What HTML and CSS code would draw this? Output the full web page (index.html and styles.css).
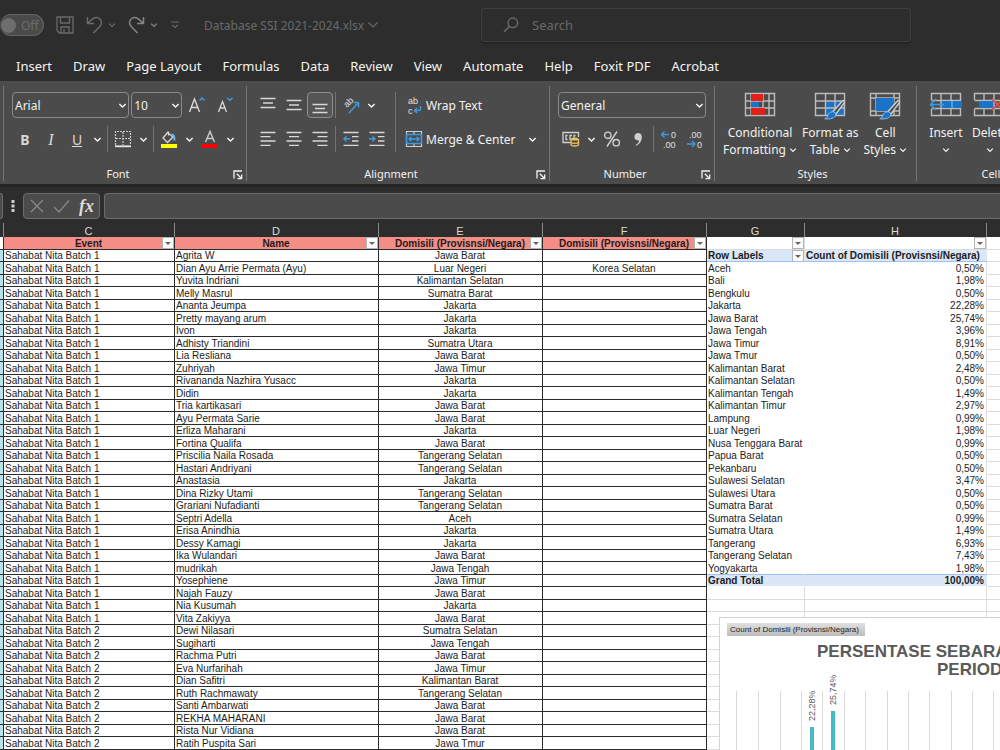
FILE: index.html
```html
<!DOCTYPE html>
<html lang="en">
<head>
<meta charset="utf-8">
<title>Database SSI 2021-2024.xlsx</title>
<link rel="stylesheet" href="styles.css">
</head>
<body>
<svg class="defs" aria-hidden="true">
  <symbol id="chev" viewBox="0 0 8 8"><path d="M1.2 2.6 4 5.4 6.8 2.6" fill="none" stroke="currentColor" stroke-width="1.300"/></symbol>
  <symbol id="launch" viewBox="0 0 10 10"><path d="M1 8.500V1h8M3.800 3.800 8 8M8.700 4.500v4.200H4.500" fill="none" stroke="currentColor" stroke-width="1.300"/></symbol>
  <symbol id="brush" viewBox="0 0 22 20"><path d="M20.500 .8c.8.6.5 1.600 0 2.300L12.500 14l-3-2.500L18.500 1.500c.6-.7 1.300-1.100 2-.7z" fill="#4b4b4b" stroke="#d0d0d0" stroke-width="1.400"/><path d="M8.800 11.800c2-.3 4 1.500 3.500 3.300-.8 3-5.500 4.300-11 3.700 2.500-.8 2.500-2 3.200-4 .7-1.700 2-2.800 4.300-3z" fill="#1a73c9" stroke="#8dc3f0" stroke-width="1"/></symbol>
</svg>

<header class="titlebar">
  <button class="autosave" type="button"><span class="knob"></span>Off</button>
  <div class="quick">
    <button type="button" aria-label="Save"><svg width="18" height="18" viewBox="0 0 18 18"><path d="M1 1h16v16H3.500L1 14.500zM4.500 1v6h9V1M5 17v-6h8v6M8 13v4" fill="none" stroke="currentColor" stroke-width="1.300"/></svg></button>
    <button type="button" aria-label="Undo"><svg width="17" height="18" viewBox="0 0 17 18"><path d="M1.500 1v6.500H8M1.800 7.200 6 3.400c3-2.700 6.700-2.200 8.400.2 1.700 2.500 1.200 5-.7 7L7.500 17" fill="none" stroke="currentColor" stroke-width="1.500"/></svg></button>
    <button type="button" aria-label="Undo list"><svg width="8" height="8"><use href="#chev"/></svg></button>
    <button type="button" class="lit" aria-label="Redo"><svg width="17" height="18" viewBox="0 0 17 18"><path d="M15.500 1v6.500H9M15.200 7.200 11 3.400c-3-2.700-6.700-2.200-8.400.2-1.700 2.500-1.200 5 .7 7L9.500 17" fill="none" stroke="currentColor" stroke-width="1.500"/></svg></button>
    <button type="button" class="lit" aria-label="Redo list"><svg width="8" height="8"><use href="#chev"/></svg></button>
    <button type="button" aria-label="Customize toolbar"><svg width="10" height="8" viewBox="0 0 10 8"><path d="M1 1h8M2.300 4 5 6.500 7.700 4" fill="none" stroke="currentColor" stroke-width="1.200"/></svg></button>
  </div>
  <button class="docname" type="button">Database SSI 2021-2024.xlsx <svg width="12" height="8" viewBox="0 0 12 8"><path d="m1.500 1.500 4.500 4.500 4.500-4.500" fill="none" stroke="currentColor" stroke-width="1.200"/></svg></button>
  <label class="search"><svg width="16" height="16" viewBox="0 0 16 16"><circle cx="9.800" cy="5.800" r="4.800" fill="none" stroke="currentColor" stroke-width="1.400"/><path d="M6.200 9.400 1 15" stroke="currentColor" stroke-width="1.500"/></svg><input type="search" placeholder="Search" aria-label="Search"></label>
</header>

<nav class="tabs">
  <a href="#insert">Insert</a><a href="#draw">Draw</a><a href="#layout">Page Layout</a><a href="#formulas">Formulas</a><a href="#data">Data</a><a href="#review">Review</a><a href="#view">View</a><a href="#automate">Automate</a><a href="#help">Help</a><a href="#foxit">Foxit PDF</a><a href="#acrobat">Acrobat</a>
</nav>

<section class="ribbon">
  <div class="group g-font">
    <div class="row combos">
      <label class="combo face"><select aria-label="Font"><option>Arial</option></select><svg width="9" height="9"><use href="#chev"/></svg></label>
      <label class="combo size"><select aria-label="Font size"><option>10</option></select><svg width="9" height="9"><use href="#chev"/></svg></label>
      <button class="tool" type="button" aria-label="Increase font size"><svg width="18" height="18" viewBox="0 0 18 18"><path d="M1.500 16 6.500 3l5 13M3.300 11.500h6.500" fill="none" stroke="#d8d8d8" stroke-width="1.400"/><path d="M11.500 4.500 14 2l2.500 2.500" fill="none" stroke="#3d9ae0" stroke-width="1.500"/></svg></button>
      <button class="tool" type="button" aria-label="Decrease font size"><svg width="18" height="18" viewBox="0 0 18 18"><path d="M2.500 16 6.500 5.500l4 10.500M4 12h5" fill="none" stroke="#d8d8d8" stroke-width="1.300"/><path d="m11.500 2 2.500 2.500L16.500 2" fill="none" stroke="#3d9ae0" stroke-width="1.500"/></svg></button>
    </div>
    <div class="row">
      <button class="tool" type="button"><b>B</b></button>
      <button class="tool" type="button"><i>I</i></button>
      <button class="tool" type="button"><u>U</u></button>
      <button class="drop" type="button" aria-label="Underline options"><svg width="9" height="9"><use href="#chev"/></svg></button>
      <span class="sep"></span>
      <button class="tool" type="button" aria-label="Borders"><svg width="18" height="18" viewBox="0 0 18 18"><path d="M1.500 15V1.500h15V15M9 2v13M2 8.500h14" fill="none" stroke="#c8c8c8" stroke-width="1.200" stroke-dasharray="2 1"/><path d="M1 16.300h16" stroke="#e8e8e8" stroke-width="1.800"/></svg></button>
      <button class="drop" type="button" aria-label="Border options"><svg width="9" height="9"><use href="#chev"/></svg></button>
      <span class="sep"></span>
      <button class="tool" type="button" aria-label="Fill color"><svg width="18" height="18" viewBox="0 0 18 18"><path d="M8.500 1.500v4M7.500 2.500 3 8l4.500 4.500L13 7z" fill="none" stroke="#d8d8d8" stroke-width="1.300"/><path d="M11.500 4.500c2 0 3.200 1.500 3 6" fill="none" stroke="#6db4ee" stroke-width="2"/><path d="M1 14h16v4H1z" fill="#ff0"/></svg></button>
      <button class="drop" type="button" aria-label="Fill options"><svg width="9" height="9"><use href="#chev"/></svg></button>
      <button class="tool" type="button" aria-label="Font color"><svg width="18" height="18" viewBox="0 0 18 18"><path d="M4.500 12 9 1.500 13.500 12M6 8.500h6" fill="none" stroke="#c8c8c8" stroke-width="1.500"/><path d="M1 14h16v4H1z" fill="#f00"/></svg></button>
      <button class="drop" type="button" aria-label="Font color options"><svg width="9" height="9"><use href="#chev"/></svg></button>
    </div>
    <div class="caption">Font<button type="button" aria-label="Font settings"><svg width="10" height="10"><use href="#launch"/></svg></button></div>
  </div>

  <div class="group g-align">
    <div class="split">
      <div class="rows">
        <div class="row">
          <button class="tool" type="button" aria-label="Top align"><svg width="16" height="18" viewBox="0 0 16 18"><path d="M.5 2.500h15M3 7h10M.5 11.500h15" stroke="#d8d8d8" stroke-width="1.300"/></svg></button>
          <button class="tool" type="button" aria-label="Middle align"><svg width="16" height="18" viewBox="0 0 16 18"><path d="M.5 4.500h15M3 9h10M.5 13.500h15" stroke="#d8d8d8" stroke-width="1.300"/></svg></button>
          <button class="tool on" type="button" aria-label="Bottom align"><svg width="16" height="18" viewBox="0 0 16 18"><path d="M.5 8.500h15M3 12.500h10M.5 16.500h15" stroke="#d8d8d8" stroke-width="1.300"/></svg></button>
          <span class="sep"></span>
          <button class="tool" type="button" aria-label="Orientation"><svg class="glyphs" width="18" height="18" viewBox="0 0 18 18"><text transform="translate(5 12) rotate(-45)">ab</text><path d="M7 17 16 7M11.500 6.500H16.500V11.500" fill="none" stroke="#3d9ae0" stroke-width="1.500"/></svg></button>
          <button class="drop" type="button" aria-label="Orientation options"><svg width="9" height="9"><use href="#chev"/></svg></button>
        </div>
        <div class="row">
          <button class="tool" type="button" aria-label="Align left"><svg width="16" height="16" viewBox="0 0 16 16"><path d="M.5 1.500h15M.5 5.700h10M.5 10h15M.5 14.300h10" stroke="#d8d8d8" stroke-width="1.300"/></svg></button>
          <button class="tool" type="button" aria-label="Center"><svg width="16" height="16" viewBox="0 0 16 16"><path d="M.5 1.500h15M3 5.700h10M.5 10h15M3 14.300h10" stroke="#d8d8d8" stroke-width="1.300"/></svg></button>
          <button class="tool" type="button" aria-label="Align right"><svg width="16" height="16" viewBox="0 0 16 16"><path d="M.5 1.500h15M5.500 5.700h10M.5 10h15M5.500 14.300h10" stroke="#d8d8d8" stroke-width="1.300"/></svg></button>
          <span class="sep"></span>
          <button class="tool" type="button" aria-label="Decrease indent"><svg width="16" height="16" viewBox="0 0 16 16"><path d="M.5 1.500h15M9 5.700h6.500M9 10h6.500M.5 14.300h15" stroke="#d8d8d8" stroke-width="1.300"/><path d="M7 7.800H1M3.500 5.300 1 7.800l2.500 2.500" fill="none" stroke="#3d9ae0" stroke-width="1.400"/></svg></button>
          <button class="tool" type="button" aria-label="Increase indent"><svg width="16" height="16" viewBox="0 0 16 16"><path d="M.5 1.500h15M9 5.700h6.500M9 10h6.500M.5 14.300h15" stroke="#d8d8d8" stroke-width="1.300"/><path d="M0 7.800h6M3.500 5.300 6 7.800l-2.500 2.500" fill="none" stroke="#3d9ae0" stroke-width="1.400"/></svg></button>
        </div>
      </div>
      <div class="rows wide">
        <div class="row"><button class="textual" type="button"><svg class="glyphs" width="18" height="22" viewBox="0 0 18 22"><text x="3" y="10">ab</text><text x="3" y="20">c</text><path d="M15.500 12v2.500q0 2-2 2H9.500M12 14l-2.500 2.500L12 19" fill="none" stroke="#3d9ae0" stroke-width="1.500"/></svg>Wrap Text</button></div>
        <div class="row"><button class="textual" type="button"><svg width="18" height="18" viewBox="0 0 18 18"><path d="M1.500 1.500h15v15h-15zM9 1.500V5M9 13v3.500" fill="none" stroke="#d0d0d0" stroke-width="1.200"/><path d="M1.500 4.500h15v9h-15zM4 9h10M6.300 6.700 4 9l2.300 2.300M11.700 6.700 14 9l-2.300 2.300" fill="none" stroke="#3d9ae0" stroke-width="1.400"/></svg>Merge &amp; Center</button><button class="drop" type="button" aria-label="Merge options"><svg width="9" height="9"><use href="#chev"/></svg></button></div>
      </div>
    </div>
    <div class="caption">Alignment<button type="button" aria-label="Alignment settings"><svg width="10" height="10"><use href="#launch"/></svg></button></div>
  </div>

  <div class="group g-number">
    <div class="row">
      <label class="combo format"><select aria-label="Number format"><option>General</option></select><svg width="9" height="9"><use href="#chev"/></svg></label>
    </div>
    <div class="row">
      <button class="tool" type="button" aria-label="Accounting format"><svg width="18" height="16" viewBox="0 0 18 16"><path d="M8 11.500H1v-10h15.500V6M5.500 4.500H4v4h1.500M10 4.500H8v4h1.500M13.500 4.500H12V7" fill="none" stroke="#d0d0d0" stroke-width="1.300"/><path d="M9 8v5.500c0 2 7.500 2 7.500 0V8" fill="#4b4b4b" stroke="#eec45f" stroke-width="1.300"/><ellipse cx="12.750" cy="8" rx="3.750" ry="1.500" fill="#eec45f"/><path d="M9 11c0 1.700 7.500 1.700 7.500 0" fill="none" stroke="#eec45f" stroke-width="1.300"/></svg></button>
      <button class="drop" type="button" aria-label="Accounting options"><svg width="9" height="9"><use href="#chev"/></svg></button>
      <button class="tool" type="button" aria-label="Percent style"><svg width="18" height="18" viewBox="0 0 18 18"><circle cx="4.800" cy="5.300" r="3.200" fill="none" stroke="#d0d0d0" stroke-width="1.400"/><circle cx="13.200" cy="12.700" r="3.200" fill="none" stroke="#d0d0d0" stroke-width="1.400"/><path d="M14 1.500 4 16.500" stroke="#d0d0d0" stroke-width="1.400"/></svg></button>
      <button class="tool" type="button" aria-label="Comma style"><svg width="10" height="14" viewBox="0 0 10 14"><path d="M2.500 13C5 12 6 10.500 6 8.300A3.700 3.700 0 1 1 8.800 4.500c.2 4.300-2 7.500-5.600 9.300z" fill="#d0d0d0"/></svg></button>
      <span class="sep"></span>
      <button class="tool" type="button" aria-label="Increase decimal"><svg class="glyphs" width="18" height="22" viewBox="0 0 18 22"><text x="11" y="10">0</text><text x="3" y="20">.00</text><path d="M9 6.500H1.500M4.500 3.500l-3 3 3 3" fill="none" stroke="#3d9ae0" stroke-width="1.400"/></svg></button>
      <button class="tool" type="button" aria-label="Decrease decimal"><svg class="glyphs" width="18" height="22" viewBox="0 0 18 22"><text x="3" y="10">.00</text><text x="11" y="20">0</text><path d="M1 16h8M6 13l3 3-3 3" fill="none" stroke="#3d9ae0" stroke-width="1.400"/></svg></button>
    </div>
    <div class="caption">Number<button type="button" aria-label="Number settings"><svg width="10" height="10"><use href="#launch"/></svg></button></div>
  </div>

  <div class="group g-styles">
    <div class="bigs">
      <button class="big" type="button"><svg width="32" height="28" viewBox="0 0 32 28"><path d="M1.500 1.500h29v22h-29zM7 1.500v22M13 1.500v22M19 1.500v22M25 1.500v22M1.500 9h29M1.500 16h29" fill="none" stroke="#bcbcbc" stroke-width="1.400"/><path d="M7 2h12v7H7zM7 16h14v7H7z" fill="#e3201b"/><path d="M7 10h8v5H7z" fill="#1a73c9"/></svg><span>Conditional<br>Formatting <svg width="8" height="8"><use href="#chev"/></svg></span></button>
      <button class="big" type="button"><svg width="32" height="28" viewBox="0 0 32 28"><path d="M12 9h19v15H12z" fill="#1a73c9"/><path d="M1.500 1.500h29v22h-29zM11.500 1.500v22M21 1.500v22M1.500 9h29M1.500 16h29" fill="none" stroke="#bcbcbc" stroke-width="1.400"/><use href="#brush" x="9" y="8" width="23" height="20"/></svg><span>Format as<br>Table <svg width="8" height="8"><use href="#chev"/></svg></span></button>
      <button class="big" type="button"><svg width="32" height="28" viewBox="0 0 32 28"><path d="M1.500 1.500h29v22h-29zM7 1.500v22M25 1.500v22M1.500 6h29M1.500 19h29" fill="none" stroke="#bcbcbc" stroke-width="1.400"/><path d="M7 6h18v13H7z" fill="#1a73c9"/><use href="#brush" x="9" y="8" width="23" height="20"/></svg><span>Cell<br>Styles <svg width="8" height="8"><use href="#chev"/></svg></span></button>
    </div>
    <div class="caption">Styles</div>
  </div>

  <div class="group g-cells">
    <div class="bigs">
      <button class="big" type="button"><svg width="34" height="28" viewBox="0 0 34 28"><path d="M2.500 8V1.500h29v22h-29V17M12 1.500v22M22 1.500v22M2.500 8.500h29M2.500 16.500h29" fill="none" stroke="#bcbcbc" stroke-width="1.400"/><path d="M13 9h20v7H13z" fill="#1a73c9"/><path d="M23 9v7" stroke="#8dc3f0"/><path d="M15 12.500H1.500M7 7l-5.500 5.500L7 18" fill="none" stroke="#3d9ae0" stroke-width="1.500"/></svg><span>Insert<br><svg width="8" height="8"><use href="#chev"/></svg></span></button>
      <button class="big" type="button"><svg width="34" height="28" viewBox="0 0 34 28"><path d="M1.500 8V1.500h30v22h-30V17M11 1.500v22M21 1.500v22M1.500 8.500h30M1.500 16.500h30" fill="none" stroke="#bcbcbc" stroke-width="1.400"/><path d="M6 9h14v7H6z" fill="#1a73c9"/><path d="m19 7 11 11M30 7 19 18" stroke="#e05050" stroke-width="1.800"/></svg><span>Delete<br><svg width="8" height="8"><use href="#chev"/></svg></span></button>
    </div>
    <div class="caption">Cells</div>
  </div>
</section>

<section class="formulabar">
  <span class="namebox"></span>
  <svg class="dots" width="4" height="14" viewBox="0 0 4 14"><path d="M.5 1h3v3h-3zM.5 5.500h3v3h-3zM.5 10h3v3h-3z" fill="#d0d0d0"/></svg>
  <div class="actions">
    <button type="button" aria-label="Cancel"><svg width="14" height="14" viewBox="0 0 14 14"><path d="m1 1 12 12M13 1 1 13" stroke="#8a8a8a" stroke-width="1.200"/></svg></button>
    <button type="button" aria-label="Enter"><svg width="17" height="14" viewBox="0 0 17 14"><path d="m1 8 5 5L16 1.500" fill="none" stroke="#8a8a8a" stroke-width="1.200"/></svg></button>
    <button type="button" class="fx">fx</button>
  </div>
  <input type="text" aria-label="Formula">
</section>

<main class="sheet">
<table>
<colgroup><col class="cb"><col class="cc"><col class="cd"><col class="ce"><col class="ce"><col class="cg"><col class="ch"><col></colgroup>
<thead>
<tr class="letters"><th><th>C<th>D<th>E<th>F<th>G<th>H<th></tr>
<tr class="titles"><td><th>Event<button type="button" aria-label="Filter"></button><th>Name<button type="button" aria-label="Filter"></button><th>Domisili (Provisnsi/Negara)<button type="button" aria-label="Filter"></button><th>Domisili (Provisnsi/Negara)<button type="button" aria-label="Filter"></button><td><button type="button" aria-label="Filter"></button><td><button type="button" aria-label="Filter"></button><td></tr>
</thead>
<tbody>
<tr class="pv head"><td><td>Sahabat Nita Batch 1<td>Agrita W<td>Jawa Barat<td><td>Row Labels<button type="button" aria-label="Filter"></button><td>Count of Domisili (Provisnsi/Negara)<td></tr>
<tr class="pv"><td><td>Sahabat Nita Batch 1<td>Dian Ayu Arrie Permata (Ayu)<td>Luar Negeri<td>Korea Selatan<td>Aceh<td>0,50%<td></tr>
<tr class="pv"><td><td>Sahabat Nita Batch 1<td>Yuvita Indriani<td>Kalimantan Selatan<td><td>Bali<td>1,98%<td></tr>
<tr class="pv"><td><td>Sahabat Nita Batch 1<td>Melly Masrul<td>Sumatra Barat<td><td>Bengkulu<td>0,50%<td></tr>
<tr class="pv"><td><td>Sahabat Nita Batch 1<td>Ananta Jeumpa<td>Jakarta<td><td>Jakarta<td>22,28%<td></tr>
<tr class="pv"><td><td>Sahabat Nita Batch 1<td>Pretty mayang arum<td>Jakarta<td><td>Jawa Barat<td>25,74%<td></tr>
<tr class="pv"><td><td>Sahabat Nita Batch 1<td>Ivon<td>Jakarta<td><td>Jawa Tengah<td>3,96%<td></tr>
<tr class="pv"><td><td>Sahabat Nita Batch 1<td>Adhisty Triandini<td>Sumatra Utara<td><td>Jawa Timur<td>8,91%<td></tr>
<tr class="pv"><td><td>Sahabat Nita Batch 1<td>Lia Resliana<td>Jawa Barat<td><td>Jawa Tmur<td>0,50%<td></tr>
<tr class="pv"><td><td>Sahabat Nita Batch 1<td>Zuhriyah<td>Jawa Timur<td><td>Kalimantan Barat<td>2,48%<td></tr>
<tr class="pv"><td><td>Sahabat Nita Batch 1<td>Rivananda Nazhira Yusacc<td>Jakarta<td><td>Kalimantan Selatan<td>0,50%<td></tr>
<tr class="pv"><td><td>Sahabat Nita Batch 1<td>Didin<td>Jakarta<td><td>Kalimantan Tengah<td>1,49%<td></tr>
<tr class="pv"><td><td>Sahabat Nita Batch 1<td>Tria kartikasari<td>Jawa Barat<td><td>Kalimantan Timur<td>2,97%<td></tr>
<tr class="pv"><td><td>Sahabat Nita Batch 1<td>Ayu Permata Sarie<td>Jawa Barat<td><td>Lampung<td>0,99%<td></tr>
<tr class="pv"><td><td>Sahabat Nita Batch 1<td>Erliza Maharani<td>Jakarta<td><td>Luar Negeri<td>1,98%<td></tr>
<tr class="pv"><td><td>Sahabat Nita Batch 1<td>Fortina Qualifa<td>Jawa Barat<td><td>Nusa Tenggara Barat<td>0,99%<td></tr>
<tr class="pv"><td><td>Sahabat Nita Batch 1<td>Priscilia Naila Rosada<td>Tangerang Selatan<td><td>Papua Barat<td>0,50%<td></tr>
<tr class="pv"><td><td>Sahabat Nita Batch 1<td>Hastari Andriyani<td>Tangerang Selatan<td><td>Pekanbaru<td>0,50%<td></tr>
<tr class="pv"><td><td>Sahabat Nita Batch 1<td>Anastasia<td>Jakarta<td><td>Sulawesi Selatan<td>3,47%<td></tr>
<tr class="pv"><td><td>Sahabat Nita Batch 1<td>Dina Rizky Utami<td>Tangerang Selatan<td><td>Sulawesi Utara<td>0,50%<td></tr>
<tr class="pv"><td><td>Sahabat Nita Batch 1<td>Grariani Nufadianti<td>Tangerang Selatan<td><td>Sumatra Barat<td>0,50%<td></tr>
<tr class="pv"><td><td>Sahabat Nita Batch 1<td>Septri Adella<td>Aceh<td><td>Sumatra Selatan<td>0,99%<td></tr>
<tr class="pv"><td><td>Sahabat Nita Batch 1<td>Erisa Anindhia<td>Jakarta<td><td>Sumatra Utara<td>1,49%<td></tr>
<tr class="pv"><td><td>Sahabat Nita Batch 1<td>Dessy Kamagi<td>Jakarta<td><td>Tangerang<td>6,93%<td></tr>
<tr class="pv"><td><td>Sahabat Nita Batch 1<td>Ika Wulandari<td>Jawa Barat<td><td>Tangerang Selatan<td>7,43%<td></tr>
<tr class="pv last"><td><td>Sahabat Nita Batch 1<td>mudrikah<td>Jawa Tengah<td><td>Yogyakarta<td>1,98%<td></tr>
<tr class="pv total"><td><td>Sahabat Nita Batch 1<td>Yosephiene<td>Jawa Timur<td><td>Grand Total<td>100,00%<td></tr>
<tr><td><td>Sahabat Nita Batch 1<td>Najah Fauzy<td>Jawa Barat<td><td><td><td></tr>
<tr><td><td>Sahabat Nita Batch 1<td>Nia Kusumah<td>Jakarta<td><td><td><td></tr>
<tr><td><td>Sahabat Nita Batch 1<td>Vita Zakiyya<td>Jawa Barat<td><td><td><td></tr>
<tr><td><td>Sahabat Nita Batch 2<td>Dewi Nilasari<td>Sumatra Selatan<td><td><td><td></tr>
<tr><td><td>Sahabat Nita Batch 2<td>Sugiharti<td>Jawa Tengah<td><td><td><td></tr>
<tr><td><td>Sahabat Nita Batch 2<td>Rachma Putri<td>Jawa Barat<td><td><td><td></tr>
<tr><td><td>Sahabat Nita Batch 2<td>Eva Nurfarihah<td>Jawa Timur<td><td><td><td></tr>
<tr><td><td>Sahabat Nita Batch 2<td>Dian Safitri<td>Kalimantan Barat<td><td><td><td></tr>
<tr><td><td>Sahabat Nita Batch 2<td>Ruth Rachmawaty<td>Tangerang Selatan<td><td><td><td></tr>
<tr><td><td>Sahabat Nita Batch 2<td>Santi Ambarwati<td>Jawa Barat<td><td><td><td></tr>
<tr><td><td>Sahabat Nita Batch 2<td>REKHA MAHARANI<td>Jawa Barat<td><td><td><td></tr>
<tr><td><td>Sahabat Nita Batch 2<td>Rista Nur Vidiana<td>Jawa Barat<td><td><td><td></tr>
<tr><td><td>Sahabat Nita Batch 2<td>Ratih Puspita Sari<td>Jawa Tmur<td><td><td><td></tr>
</tbody>
</table>
<figure class="chart">
  <button class="field" type="button">Count of Domisili (Provisnsi/Negara)</button>
  <figcaption><span>PERSENTASE SEBARAN</span><span class="second">PERIODE</span></figcaption>
  <svg class="plot" width="290" height="80" viewBox="0 0 290 80">
    <path d="M16.500 20v60M38.500 20v60M60.500 20v60M81.500 20v60M102.500 20v60M124.500 20v60M145.500 20v60M167.500 20v60M188.500 20v60M209.500 20v60M231.500 20v60M252.500 20v60M273.500 20v60" stroke="#d9d9d9"/>
    <path d="M90 56h4v24h-4zM111 40h4v40h-4z" fill="#45bac3"/>
    <text transform="translate(95 50) rotate(-90)">22,28%</text>
    <text transform="translate(116 34) rotate(-90)">25,74%</text>
  </svg>
</figure>
</main>
</body>
</html>
```
FILE: styles.css
```css
* { box-sizing: border-box; }

body {
  margin: 0;
  height: 100vh;
  display: flex;
  flex-direction: column;
  overflow: hidden;
  background: #2d2d2d;
  color: #f2f2f2;
  font: 13px/17px "Noto Sans", "Open Sans", sans-serif;
}

button, input, select { font: inherit; color: inherit; }
button { padding: 0; border: 0; background: none; white-space: nowrap; }
svg { display: block; flex: none; }
.defs { position: absolute; width: 0; height: 0; }

/* Title bar */
.titlebar { flex: none; height: 50px; display: flex; align-items: center; color: #6a6a6a; }
.autosave {
  display: flex; align-items: center; gap: 5px; flex: none;
  width: 44px; height: 22px; padding-left: 1px;
  border: 1px solid #646464; border-left: 0; border-radius: 11px;
  background: #4a4a4a; color: #6c6c6c; font-size: 12px;
}
.knob { width: 15px; height: 15px; border-radius: 50%; background: #6e6e6e; }
.quick { display: flex; align-items: center; gap: 12px; padding-left: 12px; flex: none; }
.quick button:nth-child(3), .quick button:nth-child(5) { margin-left: -7px; }
.lit { color: #858585; }
.docname { display: flex; align-items: center; gap: 3px; margin-left: 24px; width: 277px; flex: none; font-size: 12px; }
.search {
  display: flex; align-items: center; gap: 13px; flex: 0 1 430px;
  height: 34px; padding-left: 21px;
  border: 1px solid #3d3d3d; border-radius: 3px; box-shadow: 0 1px 2px #1e1e1e;
}
.search input { flex: 1; min-width: 0; padding: 0; border: 0; outline: 0; background: none; font-size: 13px; }
.search input::placeholder { color: #6a6a6a; opacity: 1; }

/* Tabs */
.tabs { flex: none; height: 31px; display: flex; gap: 21px; padding: 8px 16px 0; }
.tabs a { color: #f4f4f4; text-decoration: none; white-space: nowrap; }

/* Ribbon */
.ribbon {
  flex: none; height: 103px; display: flex; padding: 5px 0 3px 3px;
  background: #4b4b4b; overflow: hidden;
}
.group {
  flex: none; display: flex; flex-direction: column; gap: 8px;
  padding: 6px 8px 0; border-left: 1px solid #767676;
}
.g-font { width: 243px; }
.g-align { width: 303px; }
.g-number { width: 165px; }
.g-styles { width: 202px; }
.g-cells { width: 150px; }
.row { display: flex; align-items: center; height: 26px; }
.combos { gap: 2px; }
.combo { position: relative; display: block; height: 26px; }
.combo select {
  width: 100%; height: 100%; padding: 0 0 0 2px; appearance: none;
  border: 1px solid #8a8a8a; border-radius: 4px; background: #4b4b4b; font-size: 12px;
}
.combo svg { position: absolute; right: 2px; top: 9px; pointer-events: none; }
.face { width: 120px; }
.size { width: 52px; }
.format { width: 150px; }
.tool, .drop { display: flex; align-items: center; justify-content: center; height: 26px; flex: none; }
.tool { width: 26px; font-size: 14px; color: #d8d8d8; }
.tool i { font-family: "Liberation Serif", serif; font-size: 16px; }
.drop { width: 15px; }
.on { border: 1px solid #8e8e8e; border-radius: 4px; background: #555; }
.glyphs { overflow: visible; font: 9px/10px "Liberation Sans", Arial, sans-serif; fill: #e0e0e0; }
.sep { flex: none; width: 1px; height: 26px; margin: 0 2px; background: #737373; }
.split { display: flex; }
.rows { display: flex; flex-direction: column; gap: 8px; width: 140px; flex: none; }
.wide { width: 145px; padding-left: 9px; border-left: 1px solid #737373; }
.wide .row { justify-content: space-between; }
.textual { display: flex; align-items: center; gap: 3px; font-size: 12px; }
.caption { position: relative; margin-top: auto; height: 14px; padding-right: 14px; text-align: center; font-size: 11px; line-height: 14px; }
.caption button { position: absolute; right: -5px; bottom: 1px; }
.g-styles .caption, .g-cells .caption { padding: 0; }
.bigs { display: flex; gap: 5px; }
.big { display: flex; flex-direction: column; align-items: center; gap: 4px; font-size: 12px; line-height: 17px; }
.big span svg { display: inline-block; }
.g-styles { padding-right: 14px; }
.g-cells { padding-left: 12px; }
.g-cells .bigs { gap: 9px; }

/* Formula bar */
.formulabar {
  flex: none; height: 40px; padding: 6px 0 5px; display: flex; align-items: center;
  border-top: 3px solid #242424; background: #2d2d2d;
}
.namebox { width: 3px; height: 26px; border: 1px solid #6c6c6c; border-left: 0; border-radius: 0 4px 4px 0; background: #4b4b4b; }
.dots { margin: 0 8px; }
.actions {
  display: flex; align-items: center; justify-content: space-between; width: 77px; height: 26px; padding: 0 5px 0 6px;
  border: 1px solid #6c6c6c; border-radius: 4px; background: #4b4b4b;
}
.fx { font: italic bold 18px/20px "Liberation Serif", serif; color: #dcdcdc; }
.formulabar input {
  flex: 1; min-width: 0; height: 26px; margin-left: 4px; border: 1px solid #6c6c6c; border-right: 0;
  border-radius: 4px 0 0 4px; background: #4b4b4b;
}

/* Worksheet */
.sheet {
  position: relative; flex: 1; min-height: 0; overflow: hidden; margin-top: -1px;
  background: #fff; color: #1c1c1c; font: 10px/12px "Liberation Sans", Arial, sans-serif;
}
table { width: 100%; table-layout: fixed; border-collapse: separate; border-spacing: 0; }
.cb { width: 4px; }
.cc { width: 171px; }
.cd { width: 204px; }
.ce { width: 164px; }
.cg { width: 98px; }
.ch { width: 182px; }
td, th {
  position: relative; height: 12px; padding: 0 2px 0 1px; overflow: hidden; white-space: nowrap;
  line-height: 11px; vertical-align: middle;
  border-right: 1px solid #2b2b2b; border-bottom: 1px solid #2b2b2b;
}
tbody tr:nth-child(even) td, .titles td, .titles th { height: 13px; }
td:nth-child(4), td:nth-child(5) { text-align: center; }
td:nth-child(1) { padding: 0; background: #b9e3ea; }
td:nth-child(n+6) { border-color: #dcdcdc; }
td:nth-child(7) { text-align: right; }
tr > :nth-child(8) { border-right: 0; }
.letters th {
  height: 14px; padding-top: 3px; font-weight: 400; font-size: 11px; color: #dcdcdc;
  background: #2d2d2d; border-right-color: #8a8a8a; border-bottom: 0;
}
.titles th { background: #f38d85; text-align: center; }
.titles td:nth-child(1) { background: #fff; }
.pv td:nth-child(6), .pv td:nth-child(7) { border-bottom-color: #fff; }
.pv td:nth-child(6) { border-right-color: #fff; }
.pv.head td:nth-child(n+6), .total td:nth-child(n+6) { font-weight: 700; }
.head td:nth-child(6), .head td:nth-child(7), .total td:nth-child(6), .total td:nth-child(7) {
  background: #dae7f8; border-right-color: #dae7f8;
}
.head td:nth-child(7) { text-align: left; }
.head td:nth-child(6), .head td:nth-child(7), .last td:nth-child(6), .last td:nth-child(7) { border-bottom-color: #9dc0f2; }
table button {
  position: absolute; right: 0; top: 0; width: 12px; height: 12px;
  border: 1px solid #b4b4b4; background: #fbfbfb;
}
table button::after {
  content: ""; position: absolute; left: 2px; top: 4px;
  border: 3px solid transparent; border-top-color: #666; border-bottom: 0;
}

/* Pivot chart floating over the grid */
.chart {
  position: absolute; left: 719px; top: 394px; width: 420px; height: 300px; margin: 0; padding: 5px 7px;
  border: 1px solid #d4d4d4; background: #fff;
}
.field {
  display: block; width: 138px; height: 13px; padding-left: 3px; text-align: left; font-size: 8px;
  background: linear-gradient(#e0e0e0, #bdbdbd); color: #222;
}
figcaption {
  display: flex; flex-direction: column; padding: 7px 0 0 90px;
  font-size: 17px; font-weight: 700; line-height: 18px; color: #595959;
}
.second { padding-left: 120px; }
.plot { margin: -8px 0 0 -7px; }
.plot text { font-size: 9px; fill: #595959; }
```
